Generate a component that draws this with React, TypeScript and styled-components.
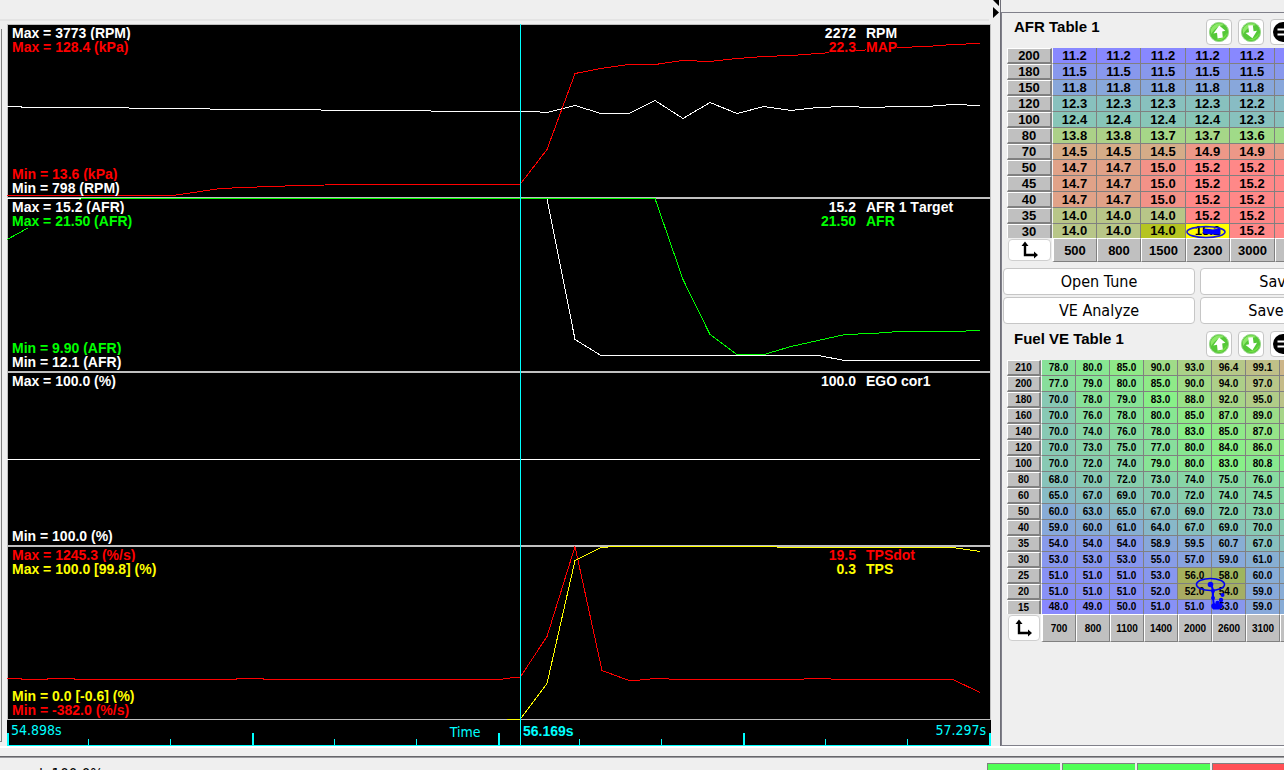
import React from "react";
import styled, { createGlobalStyle } from "styled-components";

const SANS = `"Liberation Sans", Arial, sans-serif`;
const UI = `"DejaVu Sans Condensed", "DejaVu Sans", Tahoma, sans-serif`;

const GlobalStyle = createGlobalStyle`
  * { box-sizing: border-box; }
  body {
    margin: 0;
    background: #efefef;
    color: #000;
    font-family: ${SANS};
    overflow: hidden;
  }
`;

/* ---------- data ---------- */

type Trace = { color: string; points: string };
type Label = { text: string; color: string };
type Readout = { value: string; name: string; color: string };
type Graph = { max: Label[]; min: Label[]; readouts: Readout[]; traces: Trace[]; top: number };

const WHITE = "#ffffff";
const RED = "#ff0000";
const GREEN = "#00ff00";
const YELLOW = "#ffff00";

const graphs: Graph[] = [
  {
    top: 24,
    max: [
      { text: "Max = 3773 (RPM)", color: WHITE },
      { text: "Max = 128.4 (kPa)", color: RED },
    ],
    min: [
      { text: "Min = 13.6 (kPa)", color: RED },
      { text: "Min = 798 (RPM)", color: WHITE },
    ],
    readouts: [
      { value: "2272", name: "RPM", color: WHITE },
      { value: "22.3", name: "MAP", color: RED },
    ],
    traces: [
      {
        color: WHITE,
        points:
          "7,106 21,106 22,107 128,107 130,108 209,108 211,109 320,109 322,110 430,110 432,111 533,111 547,112 575,105 601,113 629,113 655,100 683,118 710,102 737,113 764,106 791,110 818,107 845,106 872,107 899,106 926,106 953,104 980,105",
      },
      {
        color: RED,
        points:
          "7,195 173,195 200,191 220,188 245,187 270,186 300,185 350,184 520,184 547,149 575,73 601,68 629,64 655,64 683,60 710,61 737,58 764,56 791,55 818,53 845,51 872,49 899,47 926,46 953,44 980,43",
      },
    ],
  },
  {
    top: 198,
    max: [
      { text: "Max = 15.2 (AFR)", color: WHITE },
      { text: "Max = 21.50 (AFR)", color: GREEN },
    ],
    min: [
      { text: "Min = 9.90 (AFR)", color: GREEN },
      { text: "Min = 12.1 (AFR)", color: WHITE },
    ],
    readouts: [
      { value: "15.2", name: "AFR 1 Target", color: WHITE },
      { value: "21.50", name: "AFR", color: GREEN },
    ],
    traces: [
      { color: WHITE, points: "7,198 547,198 575,339 601,355 818,355 845,360 980,360" },
      {
        color: GREEN,
        points:
          "7,239 82,198 655,198 683,279 710,334 737,354 764,354 791,346 818,340 845,334 872,333 899,331 953,331 980,330",
      },
    ],
  },
  {
    top: 372,
    max: [{ text: "Max = 100.0 (%)", color: WHITE }],
    min: [{ text: "Min = 100.0 (%)", color: WHITE }],
    readouts: [{ value: "100.0", name: "EGO cor1", color: WHITE }],
    traces: [{ color: WHITE, points: "7,459 980,459" }],
  },
  {
    top: 546,
    max: [
      { text: "Max = 1245.3 (%/s)", color: RED },
      { text: "Max = 100.0 [99.8] (%)", color: YELLOW },
    ],
    min: [
      { text: "Min = 0.0 [-0.6] (%)", color: YELLOW },
      { text: "Min = -382.0 (%/s)", color: RED },
    ],
    readouts: [
      { value: "19.5", name: "TPSdot", color: RED },
      { value: "0.3", name: "TPS", color: YELLOW },
    ],
    traces: [
      {
        color: RED,
        points:
          "7,678 21,678 22,679 47,679 48,678 74,678 75,679 236,679 237,678 263,678 264,679 499,679 514,677 520,677 547,636 575,546 602,670 629,680 635,680 655,678 668,678 670,679 803,679 805,678 830,678 832,679 953,679 980,692",
      },
      {
        color: YELLOW,
        points: "507,719 520,719 547,683 575,560 601,547 615,546 776,546 778,547 953,547 980,551",
      },
    ],
  },
];

const majorTicks = [1, 246, 492, 737, 983];
const minorTicks = [81, 163, 327, 409, 572, 654, 818, 900];

const afrCols = ["500", "800", "1500", "2300", "3000"];
const afrRows: { load: string; cells: number[]; edge: number }[] = [
  { load: "200", cells: [11.2, 11.2, 11.2, 11.2, 11.2], edge: 11.2 },
  { load: "180", cells: [11.5, 11.5, 11.5, 11.5, 11.5], edge: 11.5 },
  { load: "150", cells: [11.8, 11.8, 11.8, 11.8, 11.8], edge: 11.8 },
  { load: "120", cells: [12.3, 12.3, 12.3, 12.3, 12.2], edge: 12.2 },
  { load: "100", cells: [12.4, 12.4, 12.4, 12.4, 12.3], edge: 12.3 },
  { load: "80", cells: [13.8, 13.8, 13.7, 13.7, 13.6], edge: 13.6 },
  { load: "70", cells: [14.5, 14.5, 14.5, 14.9, 14.9], edge: 14.8 },
  { load: "50", cells: [14.7, 14.7, 15.0, 15.2, 15.2], edge: 15.2 },
  { load: "45", cells: [14.7, 14.7, 15.0, 15.2, 15.2], edge: 15.2 },
  { load: "40", cells: [14.7, 14.7, 15.0, 15.2, 15.2], edge: 15.2 },
  { load: "35", cells: [14.0, 14.0, 14.0, 15.2, 15.2], edge: 15.2 },
  { load: "30", cells: [14.0, 14.0, 14.0, 15.2, 15.2], edge: 15.2 },
];
const afrActive: Record<string, string> = { "11-2": "#b5c422", "11-3": "#ffff00" };

const veCols = ["700", "800", "1100", "1400", "2000", "2600", "3100"];
const veRows: { load: string; cells: number[]; edge: number }[] = [
  { load: "210", cells: [78, 80, 85, 90, 93, 96.4, 99.1], edge: 103 },
  { load: "200", cells: [77, 79, 80, 85, 90, 94, 97], edge: 101 },
  { load: "180", cells: [70, 78, 79, 83, 88, 92, 95], edge: 98 },
  { load: "160", cells: [70, 76, 78, 80, 85, 87, 89], edge: 92 },
  { load: "140", cells: [70, 74, 76, 78, 83, 85, 87], edge: 88 },
  { load: "120", cells: [70, 73, 75, 77, 80, 84, 86], edge: 86 },
  { load: "100", cells: [70, 72, 74, 79, 80, 83, 80.8], edge: 81 },
  { load: "80", cells: [68, 70, 72, 73, 74, 75, 76], edge: 77 },
  { load: "60", cells: [65, 67, 69, 70, 72, 74, 74.5], edge: 75 },
  { load: "50", cells: [60, 63, 65, 67, 69, 72, 73], edge: 74 },
  { load: "40", cells: [59, 60, 61, 64, 67, 69, 70], edge: 71 },
  { load: "35", cells: [54, 54, 54, 58.9, 59.5, 60.7, 67], edge: 68 },
  { load: "30", cells: [53, 53, 53, 55, 57, 59, 61], edge: 63 },
  { load: "25", cells: [51, 51, 51, 53, 56, 58, 60], edge: 61 },
  { load: "20", cells: [51, 51, 51, 52, 52, 54, 59], edge: 60 },
  { load: "15", cells: [48, 49, 50, 51, 51, 53, 59], edge: 60 },
];
const veActive: Record<string, string> = {
  "13-4": "#a6b15c",
  "13-5": "#9eb55f",
  "14-4": "#a9ab62",
  "14-5": "#a4ae63",
};

/* Blue at the low end, green in the middle, red at the high end. */
function heat(value: number, low: number, high: number): string {
  const t = ((value - low) / (high - low)) * 2;
  const mix = (a: number, b: number, k: number) => Math.round(a + (b - a) * k);
  if (t < 1) return `rgb(136, ${mix(136, 240, t)}, ${mix(255, 136, t)})`;
  return `rgb(${mix(136, 255, t - 1)}, ${mix(240, 136, t - 1)}, 136)`;
}

/* ---------- frame ---------- */

const Page = styled.div`
  display: flex;
  flex-direction: column;
  height: 100vh;
  overflow: hidden;
`;

const Workspace = styled.main`
  display: flex;
  flex: 1;
  min-height: 0;
  border-bottom: 2px solid #fff;
`;

const NeighbourEdge = styled.div`
  width: 2px;
  margin: 29px 5px 4px 0;
  border-right: 1px solid #808080;
  border-bottom: 1px solid #808080;
`;

const ChartColumn = styled.section`
  display: flex;
  flex-direction: column;
  flex: 1;
  min-width: 0;
`;

const TopStrip = styled.div`
  height: 24px;
  margin: 0 2px 0 -7px;
  padding-top: 19px;

  &::after {
    content: "";
    display: block;
    height: 2px;
    background: #e4e4e4;
  }
`;

const Divider = styled.div`
  width: 10px;
  padding-left: 2px;
  border-right: 1px solid #6f6f78;

  svg { display: block; }
`;

const StatusBar = styled.footer`
  display: flex;
  flex: 0 0 22px;
  padding-top: 8px;
  overflow: hidden;
`;

const StatusInner = styled.div`
  display: flex;
  flex: 1;
  justify-content: space-between;
  border-top: 1px solid #66666a;
  box-shadow: inset 0 1px 0 #9a9a9e;
  height: 40px;
`;

const StatusText = styled.span`
  padding: 9px 0 0 2px;
  font: 15px/18px ${UI};
`;

const Lamps = styled.div`
  display: flex;
  gap: 2px;
  width: 297px;
  padding-top: 6px;
  overflow: hidden;
`;

const Lamp = styled.span<{ $color: string }>`
  flex: 0 0 73px;
  height: 24px;
  background: ${(p) => p.$color};
  border-top: 1px solid #808080;
  border-left: 1px solid #808080;
`;

/* ---------- graphs ---------- */

const Graphs = styled.div`
  position: relative;
  display: flex;
  flex-direction: column;
  flex: 1;
  min-height: 0;
  background: #000;
`;

const Panel = styled.div`
  position: relative;
  display: flex;
  justify-content: space-between;
  flex: 1;
  border: 1px solid #c0c0c0;
`;

const Plot = styled.svg`
  position: absolute;
  inset: -1px;
  width: calc(100% + 2px);
  height: calc(100% + 2px);
  overflow: visible;

  polyline {
    fill: none;
    stroke-width: 1px;
    vector-effect: non-scaling-stroke;
    shape-rendering: crispEdges;
  }
`;

const RangeColumn = styled.div`
  position: relative;
  display: flex;
  flex-direction: column;
  justify-content: space-between;
  padding: 1px 0 2px 4px;
`;

const RangeGroup = styled.div`
  display: flex;
  flex-direction: column;
  align-items: flex-start;
`;

const GraphText = styled.span<{ $color: string }>`
  color: ${(p) => p.$color};
  background: #000;
  font: bold 14px/14px ${SANS};
  font-kerning: none;
  white-space: nowrap;
`;

const ReadoutList = styled.div`
  position: relative;
  display: grid;
  grid-template-columns: auto 124px;
  column-gap: 10px;
  align-content: start;
  justify-items: start;
  padding-top: 1px;

  ${GraphText}:nth-child(odd) { justify-self: end; }
`;

const Axis = styled.div`
  position: relative;
  display: flex;
  justify-content: space-between;
  flex: 0 0 26px;
  padding: 2px 5px 0 4px;
  border-bottom: 1px solid #00ffff;
`;

const Ticks = styled.svg`
  position: absolute;
  inset: 0;
  width: 100%;
  height: 25px;
  shape-rendering: crispEdges;
`;

const AxisText = styled.span`
  position: relative;
  color: #00ffff;
  font: 14px/16px ${UI};
`;

const AxisName = styled(AxisText)`
  position: absolute;
  left: 45%;
  top: 4px;
`;

const CursorTime = styled(AxisText)`
  position: absolute;
  left: calc(52.13% + 3px);
  top: 3px;
  font-family: ${SANS};
  font-weight: bold;
`;

const Cursor = styled.div`
  position: absolute;
  top: 0;
  bottom: 0;
  left: 52.13%;
  width: 1px;
  background: #00ffff;
`;

/* ---------- tuning side ---------- */

const Side = styled.aside`
  flex: 0 0 283px;
  padding-top: 12px;
  overflow: hidden;
`;

const SideFrame = styled.div`
  display: flex;
  flex-direction: column;
  align-items: flex-start;
  width: 420px;
  height: 100%;
  border: 1px solid #80808a;
  padding-left: 1px;
`;

const TableHeader = styled.header`
  display: flex;
  align-items: flex-start;
  gap: 6px;
  height: 35px;
  padding: 6px 0 0 11px;
`;

const TableTitle = styled.h2`
  width: 186px;
  margin: 0;
  font: bold 15px/16px ${SANS};
`;

const IconButton = styled.button`
  display: grid;
  place-items: center;
  width: 26px;
  height: 26px;
  padding: 0;
  background: #fff;
  border: 1px solid #c6c6c6;
  border-radius: 4px;
`;

const TableWrap = styled.div`
  position: relative;
  margin-left: 4px;
`;

const GridTable = styled.table<{ $font: number }>`
  table-layout: fixed;
  border-collapse: separate;
  border-spacing: 0;
  width: 0;
  font: bold ${(p) => p.$font}px/13px ${SANS};
  text-align: center;

  th, td { padding: 0; overflow: hidden; white-space: nowrap; }
  tbody tr { height: 16px; }
  tbody tr:last-child { height: 14px; }
  tbody td { padding-bottom: 1px; }
`;

const RowHead = styled.th`
  background: #c0c0c0;
  border: solid;
  border-width: 1px 2px 2px 1px;
  border-color: #fff #808080 #808080 #fff;

  tr:last-child > & { border-bottom-width: 0; }
`;

const Cell = styled.td<{ $tint: string }>`
  background: ${(p) => p.$tint};
  border-right: 1px solid #808080;
  border-bottom: 1px solid #808080;

  &:nth-child(2) { border-left: 1px solid #f4f4f4; }
  tr:last-child > & { border-bottom: 0; }
`;

const ColHead = styled.th<{ $height: number }>`
  height: ${(p) => p.$height}px;
  background: #c0c0c0;
  border: 1px solid;
  border-color: #fff #808080 #808080 #fff;

  &:nth-child(2) { border-left-width: 2px; }
`;

const SwapButton = styled.button<{ $height: number }>`
  display: grid;
  place-items: center;
  width: calc(100% - 2px);
  height: ${(p) => p.$height}px;
  margin: 0 1px;
  padding: 0;
  background: #fff;
  border: 1px solid #cfcfcf;
  border-radius: 4px;
`;

const Marker = styled.svg`
  position: absolute;
  inset: 0;
  overflow: visible;
  pointer-events: none;
`;

const Actions = styled.div`
  display: grid;
  grid-template-columns: 192px 192px;
  gap: 2px 5px;
  padding: 6px 0 1px;
`;

const ActionButton = styled.button`
  height: 27px;
  padding: 0;
  background: #fff;
  border: 1px solid #c6c6c6;
  border-radius: 4px;
  font: 16px/20px ${UI};
`;

/* ---------- icons ---------- */

const ArrowBadge = ({ down }: { down?: boolean }) => (
  <svg width="22" height="22" viewBox="0 0 22 22">
    <circle cx="11" cy="11" r="9.6" fill="#55c838" stroke="#9ad88a" strokeWidth="1" />
    <path d="M3 13 A8.4 8.4 0 0 1 16 4 Q8 5 3 13Z" fill="#8be866" />
    <path d="M19 12 A8.2 8.2 0 0 1 8 18.6 Q15 18 19 12Z" fill="#74e045" />
    {down ? (
      <path d="M8.2 4.6 L12.8 4.2 L13.6 10.2 L17 9.8 L12.4 17.2 L5.6 12 L9 11.2Z" fill="#fff" />
    ) : (
      <path d="M11.2 4.4 L17.4 9.8 L14.2 10.6 L14.8 16.6 L9.6 17.4 L9 11.8 L5.4 12.4Z" fill="#fff" />
    )}
  </svg>
);

const EqualsBadge = () => (
  <svg width="22" height="22" viewBox="0 0 22 22">
    <circle cx="11" cy="11" r="10" fill="#000" />
    <path d="M5.5 8.5H16.5M5.5 13.5H16.5" stroke="#fff" strokeWidth="2" />
  </svg>
);

const SwapAxesIcon = () => (
  <svg width="18" height="18" viewBox="0 0 18 18">
    <path d="M4 4V14H14" fill="none" stroke="#000" strokeWidth="2.4" />
    <path d="M4 0.5L7.5 5H0.5ZM17 14L13 10.5V17.5Z" fill="#000" />
  </svg>
);

/* ---------- parts ---------- */

const TableTools = ({ title }: { title: string }) => (
  <TableHeader>
    <TableTitle>{title}</TableTitle>
    <IconButton aria-label={`${title} increase`}><ArrowBadge /></IconButton>
    <IconButton aria-label={`${title} decrease`}><ArrowBadge down /></IconButton>
    <IconButton aria-label={`${title} set value`}><EqualsBadge /></IconButton>
  </TableHeader>
);

type TuneTableProps = {
  label: string;
  font: number;
  headWidth: number;
  colWidths: number[];
  footHeight: number;
  cols: string[];
  rows: { load: string; cells: number[]; edge: number }[];
  low: number;
  high: number;
  active: Record<string, string>;
  children: React.ReactNode;
};

const TuneTable = (p: TuneTableProps) => (
  <TableWrap>
    <GridTable $font={p.font} aria-label={p.label}>
      <colgroup>
        <col width={p.headWidth} />
        {p.colWidths.map((w, i) => (
          <col key={i} width={w} />
        ))}
      </colgroup>
      <tbody>
        {p.rows.map((row, r) => (
          <tr key={row.load}>
            <RowHead scope="row">{row.load}</RowHead>
            {row.cells.map((v, c) => (
              <Cell key={c} $tint={p.active[`${r}-${c}`] ?? heat(v, p.low, p.high)}>
                {v.toFixed(1)}
              </Cell>
            ))}
            <Cell $tint={heat(row.edge, p.low, p.high)} />
          </tr>
        ))}
      </tbody>
      <tfoot>
        <tr>
          <td>
            <SwapButton $height={p.footHeight - 2} aria-label={`${p.label} swap axes`}>
              <SwapAxesIcon />
            </SwapButton>
          </td>
          {p.cols.map((c) => (
            <ColHead key={c} scope="col" $height={p.footHeight}>{c}</ColHead>
          ))}
          <ColHead $height={p.footHeight} />
        </tr>
      </tfoot>
    </GridTable>
    {p.children}
  </TableWrap>
);

const GraphPanel = ({ graph }: { graph: Graph }) => (
  <Panel>
    <Plot viewBox="0 0 984 174" preserveAspectRatio="none" aria-hidden="true">
      {graph.traces.map((t) => (
        <polyline
          key={t.color}
          points={t.points}
          stroke={t.color}
          transform={`translate(-7 ${0.5 - graph.top})`}
        />
      ))}
    </Plot>
    <RangeColumn>
      <RangeGroup>
        {graph.max.map((l) => <GraphText key={l.text} $color={l.color}>{l.text}</GraphText>)}
      </RangeGroup>
      <RangeGroup>
        {graph.min.map((l) => <GraphText key={l.text} $color={l.color}>{l.text}</GraphText>)}
      </RangeGroup>
    </RangeColumn>
    <ReadoutList>
      {graph.readouts.map((r) => (
        <React.Fragment key={r.name}>
          <GraphText $color={r.color}>{r.value}</GraphText>
          <GraphText $color={r.color}>{r.name}</GraphText>
        </React.Fragment>
      ))}
    </ReadoutList>
  </Panel>
);

export default function App() {
  return (
    <Page>
      <GlobalStyle />
      <Workspace>
        <NeighbourEdge />
        <ChartColumn>
          <TopStrip />
          <Graphs>
            {graphs.map((g) => <GraphPanel key={g.top} graph={g} />)}
            <Axis>
              <Ticks viewBox="0 0 984 25" preserveAspectRatio="none" aria-hidden="true">
                {majorTicks.map((x) => <rect key={x} x={x - 1} y="13" width="2" height="12" fill="#00ffff" />)}
                {minorTicks.map((x) => <rect key={x} x={x} y="19" width="1" height="6" fill="#00ffff" />)}
              </Ticks>
              <AxisText>54.898s</AxisText>
              <AxisName>Time</AxisName>
              <CursorTime>56.169s</CursorTime>
              <AxisText>57.297s</AxisText>
            </Axis>
            <Cursor />
          </Graphs>
        </ChartColumn>
        <Divider>
          <svg width="6" height="18" viewBox="0 0 6 18" aria-hidden="true">
            <path d="M6 -6V6L0 0ZM0 7L6 12.5L0 18Z" fill="#000" />
          </svg>
        </Divider>
        <Side>
          <SideFrame>
            <TableTools title="AFR Table 1" />
            <TuneTable
              label="AFR Table 1"
              font={13}
              headWidth={45}
              colWidths={[45, 44, 45, 44, 45, 44]}
              footHeight={24}
              cols={afrCols}
              rows={afrRows}
              low={11.2}
              high={15.2}
              active={afrActive}
            >
              <Marker width="280" height="214" aria-hidden="true">
                <ellipse cx="199" cy="184" rx="19" ry="5.5" fill="none" stroke="#1818d8" strokeWidth="1.6" />
                <path d="M197 181L206 182L213 181V186L205 186L196 185Z" fill="#0000ff" stroke="#0000ff" />
              </Marker>
            </TuneTable>
            <Actions>
              <ActionButton>Open Tune</ActionButton>
              <ActionButton>Save Tune</ActionButton>
              <ActionButton>VE Analyze</ActionButton>
              <ActionButton>Save Tune As</ActionButton>
            </Actions>
            <TableTools title="Fuel VE Table 1" />
            <TuneTable
              label="Fuel VE Table 1"
              font={10}
              headWidth={34}
              colWidths={[35, 34, 34, 34, 34, 34, 34, 34]}
              footHeight={28}
              cols={veCols}
              rows={veRows}
              low={48}
              high={118}
              active={veActive}
            >
              <Marker width="280" height="282" aria-hidden="true">
                <ellipse cx="203.5" cy="224.5" rx="14" ry="6" fill="none" stroke="#0000f0" strokeWidth="1.6" />
                <path d="M204 224L206 230V238L207 246" fill="none" stroke="#0000ff" strokeWidth="2" />
                <path d="M206 244L212 245L215 243V247L212 249H206Z" fill="#0000ff" stroke="#0000ff" />
                <g fill="#0000ff">
                  <circle cx="203.5" cy="224.5" r="2.8" />
                  <circle cx="206" cy="231" r="2" />
                  <circle cx="206" cy="238" r="2" />
                  <circle cx="207" cy="246" r="2.8" />
                  <circle cx="215.5" cy="235" r="2" />
                  <circle cx="214" cy="240" r="2.2" />
                  <circle cx="210.5" cy="243" r="2.2" />
                </g>
              </Marker>
            </TuneTable>
          </SideFrame>
        </Side>
      </Workspace>
      <StatusBar>
        <StatusInner>
          <StatusText>speed: 100.0%</StatusText>
          <Lamps>
            <Lamp $color="#50ff55" />
            <Lamp $color="#50ff55" />
            <Lamp $color="#50ff55" />
            <Lamp $color="#ff5055" />
          </Lamps>
        </StatusInner>
      </StatusBar>
    </Page>
  );
}
